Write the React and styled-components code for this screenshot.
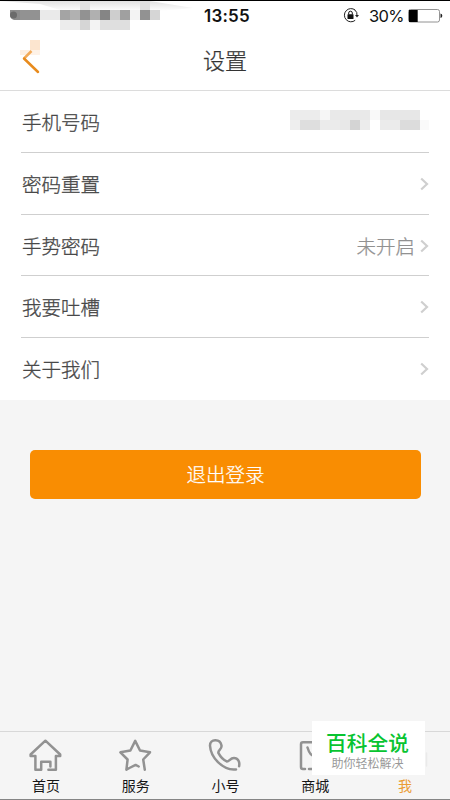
import React from "react";
import styled, { createGlobalStyle } from "styled-components";

const GlobalStyle = createGlobalStyle`
  * { box-sizing: border-box; }
  body { margin: 0; background: #f4f4f4; font-family: "Liberation Sans", "Noto Sans CJK SC", sans-serif; }
`;
const Screen = styled.div`
  position: relative;
  display: flex;
  flex-direction: column;
  width: 450px;
  height: 800px;
  overflow: hidden;
  background: #f5f5f5;
  border-top: 1px solid #000;
  border-bottom: 1px solid #858585;
`;
const StatusBar = styled.div`
  display: grid;
  grid-template-columns: 204px 1fr auto;
  height: 30px;
  padding-right: 7px;
  background: #fff;
  color: #111;
  flex: none;
`;
const Clock = styled.span`
  font: 600 17px/30px Inter, sans-serif;
  letter-spacing: 0.2px;
`;
const StatusRight = styled.div`
  display: flex;
  height: 29px;
  align-items: center;
`;
const Battery = styled.span`
  font: 400 16.5px/30px Inter, sans-serif;
  margin: 1px 4px 0 10px;
  width: 35px;
  white-space: nowrap;
  letter-spacing: -0.7px;
`;
const Header = styled.header`
  display: grid;
  grid-template-columns: 60px 1fr 60px;
  height: 60px;
  background: #fff;
  border-bottom: 1px solid #dcdcdc;
  flex: none;
`;
const Title = styled.h1`
  margin: 0;
  font-size: 22px;
  font-weight: 300;
  line-height: 61px;
  text-align: center;
  color: #333;
  -webkit-text-stroke: 0.25px #333;
`;
const Drawing = styled.svg`
  display: block;
  flex: none;
  overflow: visible;
`;
const List = styled.div`
  padding: 0 21px;
  background: #fff;
  flex: none;
`;
const Row = styled.div`
  display: flex;
  align-items: center;
  height: ${(p) => p.$height}px;
  padding-top: ${(p) => p.$height % 2}px;
  border-bottom: 1px solid ${(p) => (p.$last ? "transparent" : "#cfcfcf")};
`;
const RowLabel = styled.span`
  flex: 1;
  padding: 2px 0 0 1px;
  font-size: 19.5px;
  font-weight: 300;
  line-height: 28px;
  color: #484848;
  -webkit-text-stroke: 0.3px #484848;
`;
const RowValue = styled.span`
  padding-top: 2px;
  margin-right: 5px;
  font-size: 19.5px;
  font-weight: 300;
  line-height: 28px;
  color: #919191;
  -webkit-text-stroke: 0.25px #919191;
`;
const Logout = styled.button`
  height: 49px;
  margin: 50px 29px 0 30px;
  padding: 0 0 2px;
  border: 0;
  border-radius: 5px;
  background: #f98d02;
  color: #fff;
  font: 300 19.5px/47px "Noto Sans CJK SC", sans-serif;
  -webkit-text-stroke: 0.25px #fff;
  flex: none;
`;
const TabBar = styled.nav`
  display: grid;
  grid-template-columns: repeat(5, 89.8px);
  height: 68px;
  margin-top: auto;
  padding-left: 1px;
  border-top: 1px solid #d8d8d8;
  background: #f5f5f5;
`;
const Tab = styled.div`
  display: flex;
  flex-direction: column;
  align-items: center;
  padding-top: 6px;
  font-size: 14px;
  line-height: 20px;
  color: ${(p) => (p.$active ? "#eb9d35" : "#151515")};
`;
const TabIcon = styled(Drawing)`
  width: 36px;
  height: 36px;
  margin-bottom: 2px;
  fill: none;
  stroke: #929292;
  stroke-width: 2.5;
  stroke-linecap: round;
  stroke-linejoin: round;
`;
const Stamp = styled.aside`
  position: absolute;
  left: 312px;
  top: 720px;
  width: 113px;
  height: 54px;
  background: #fff;
  text-align: center;
`;
const StampName = styled.div`
  padding-top: 9px;
  padding-right: 2px;
  font-size: 20.7px;
  line-height: 28px;
  font-weight: 500;
  color: #08c431;
  white-space: nowrap;
`;
const StampLine = styled.div`
  padding-right: 2px;
  font-size: 12px;
  line-height: 12px;
  color: #999;
`;

const carrierBlocks = [
  [20, 9, 20, 10, "#929292"], [40, 9, 20, 10, "#eaeaea"],
  [60, 9, 10, 10, "#a4a4a4"], [70, 9, 10, 10, "#b1b1b1"],
  [80, 0, 10, 9, "#e1e1e1"], [80, 9, 10, 10, "#929292"],
  [90, 9, 10, 10, "#b0b0b0"], [100, 9, 10, 10, "#858585"],
  [110, 9, 10, 10, "#cecece"], [120, 9, 10, 10, "#a0a0a0"],
  [130, 9, 10, 10, "#f3f3f3"], [140, 0, 10, 9, "#dfdfdf"],
  [140, 9, 10, 10, "#929292"], [150, 9, 10, 10, "#d6d6d6"],
  [60, 19, 20, 10, "#ececec"], [80, 19, 10, 10, "#d6d6d6"],
  [90, 19, 10, 10, "#f3f3f3"], [100, 19, 30, 10, "#dfdfdf"],
];
const phoneBlocks = [
  [0, 0, 30, 10, "#ececec"], [30, 0, 10, 10, "#f6f6f6"],
  [40, 0, 40, 10, "#e9e9e9"], [80, 0, 10, 10, "#f9f9f9"],
  [90, 0, 40, 10, "#e7e7e7"], [0, 10, 10, 10, "#eee"],
  [10, 10, 20, 10, "#dedede"], [30, 10, 20, 10, "#ebebeb"],
  [50, 10, 10, 10, "#e8e8e8"], [60, 10, 10, 10, "#d4d4d4"],
  [70, 10, 10, 10, "#ececec"], [90, 10, 20, 10, "#ebebeb"],
  [110, 10, 20, 10, "#dcdcdc"], [130, 10, 9, 10, "#fafafa"],
];
const Blocks = ({ items }) =>
  items.map(([x, y, w, h, c], i) => (
    <rect key={i} x={x} y={y} width={w} height={h} fill={c} shapeRendering="crispEdges" />
  ));

const Carrier = () => (
  <Drawing width="204" height="30">
    <defs>
      <linearGradient id="smear" x2="0" y2="1">
        <stop stopColor="#e2e2e2" />
        <stop offset="1" stopColor="#fff" />
      </linearGradient>
    </defs>
    <path d="M0 0H150L193 7L160 10L150 9H60L40 3Z" fill="url(#smear)" />
    <Blocks items={carrierBlocks} />
    <path d="M10 9H20V19H14Q10 18 10 14Z" fill="#8c8c8c" />
    <circle cx="13.5" cy="14" r="3.5" fill="#6b6b6b" />
  </Drawing>
);
const Lock = () => (
  <Drawing width="16" height="16" viewBox="0 0 16 16">
    <path d="M12.2 2.1A6.6 6.6 0 1 0 12.2 12.3M11.5 1.6A6.6 6.6 0 0 1 14 8" fill="none" stroke="#222" strokeWidth="1" />
    <path d="M12 7.1H16L14 9.6Z" fill="#222" />
    <rect x="4.5" y="6.3" width="6" height="4.7" rx=".5" fill="#111" />
    <path d="M5.7 6.5V5a1.8 1.8 0 0 1 3.6 0v1.5" fill="none" stroke="#111" strokeWidth="1" />
  </Drawing>
);
const BatteryIcon = () => (
  <Drawing width="35" height="14">
    <rect x=".5" y=".5" width="31" height="12.5" rx="2" fill="#fff" stroke="#777" strokeWidth=".8" />
    <path d="M1 1H9.7V13H1Z" fill="#000" />
    <path d="M32.5 4.5Q34.3 5 34.3 6.7T32.5 9Z" fill="#222" />
  </Drawing>
);
const Back = () => (
  <Drawing width="60" height="59">
    <rect x="30" y="9" width="10" height="10" fill="#fce5cf" />
    <rect x="20" y="19" width="10" height="5" fill="#fdefe2" />
    <rect x="30" y="19" width="10" height="5" fill="#fef2e7" />
    <path d="M31.5 20L24 27.5" fill="none" stroke="#f2aa58" strokeWidth="2.5" />
    <path d="M24 27.5L38 41" fill="none" stroke="#e88b1d" strokeWidth="2.5" strokeLinecap="round" />
  </Drawing>
);
const Chevron = () => (
  <Drawing width="9" height="14">
    <path d="M1.2 1.5L7 7L1.2 12.5" fill="none" stroke="#cfcfcf" strokeWidth="2.2" />
  </Drawing>
);

const rows = [
  { label: "手机号码", height: 62, masked: true },
  { label: "密码重置", height: 62 },
  { label: "手势密码", height: 61, value: "未开启" },
  { label: "我要吐槽", height: 62 },
  { label: "关于我们", height: 62, last: true },
];
const tabs = [
  { label: "首页", icon: <path d="M23 29V24.3H13.8V32.2H8V18.5H3.2V17L18 3.2L32.8 17V18.5H28.5V32.2H21" transform="translate(-.6 -.5)" /> },
  { label: "服务", icon: <path d="M12.2 30.5L9.2 32.2L10.4 22L3.2 14.8L13.2 13L18 3.4L22.8 13L32.8 14.8L26 22L27.6 32.2M12.2 30.5L18.4 27.4L21.5 29" transform="translate(-.8 -.5)" /> },
  { label: "小号", icon: <path d="M29.5 32.2Q20 33.3 11.5 25Q4 17.3 3.5 8.5C3.3 1.7 13.5 1 15 8.2C15.8 12.3 10.7 13.2 12 16C14.2 20.2 17 22.8 20.2 24.2C22.7 24.7 23.4 20.8 27.5 20.8C31.4 20.8 33.5 24.2 32.6 29" transform="translate(-.5 -.8)" /> },
  { label: "商城", icon: <path d="M24 4.2H6Q4 4.2 4 6.2V29Q4 31 6 31H8M12 31H24M10.5 9.5Q13 18.3 18 18.3T25.5 9.5" /> },
  { label: "我", active: true, icon: <path d="M39.5 15V28" stroke="#eaeaea" strokeWidth="1.5" /> },
];

export default function App() {
  return (
    <Screen>
      <GlobalStyle />
      <StatusBar>
        <Carrier />
        <Clock>13:55</Clock>
        <StatusRight>
          <Lock />
          <Battery>30%</Battery>
          <BatteryIcon />
        </StatusRight>
      </StatusBar>
      <Header>
        <Back />
        <Title>设置</Title>
      </Header>
      <List>
        {rows.map((row) => (
          <Row key={row.label} $height={row.height} $last={row.last}>
            <RowLabel>{row.label}</RowLabel>
            {row.value && <RowValue>{row.value}</RowValue>}
            {row.masked ? (
              <Drawing width="139" height="23"><Blocks items={phoneBlocks} /></Drawing>
            ) : (
              <Chevron />
            )}
          </Row>
        ))}
      </List>
      <Logout>退出登录</Logout>
      <TabBar>
        {tabs.map((tab) => (
          <Tab key={tab.label} $active={tab.active}>
            <TabIcon viewBox="0 0 36 36">{tab.icon}</TabIcon>
            {tab.label}
          </Tab>
        ))}
      </TabBar>
      <Stamp>
        <StampName>百科全说</StampName>
        <StampLine>助你轻松解决</StampLine>
      </Stamp>
    </Screen>
  );
}
